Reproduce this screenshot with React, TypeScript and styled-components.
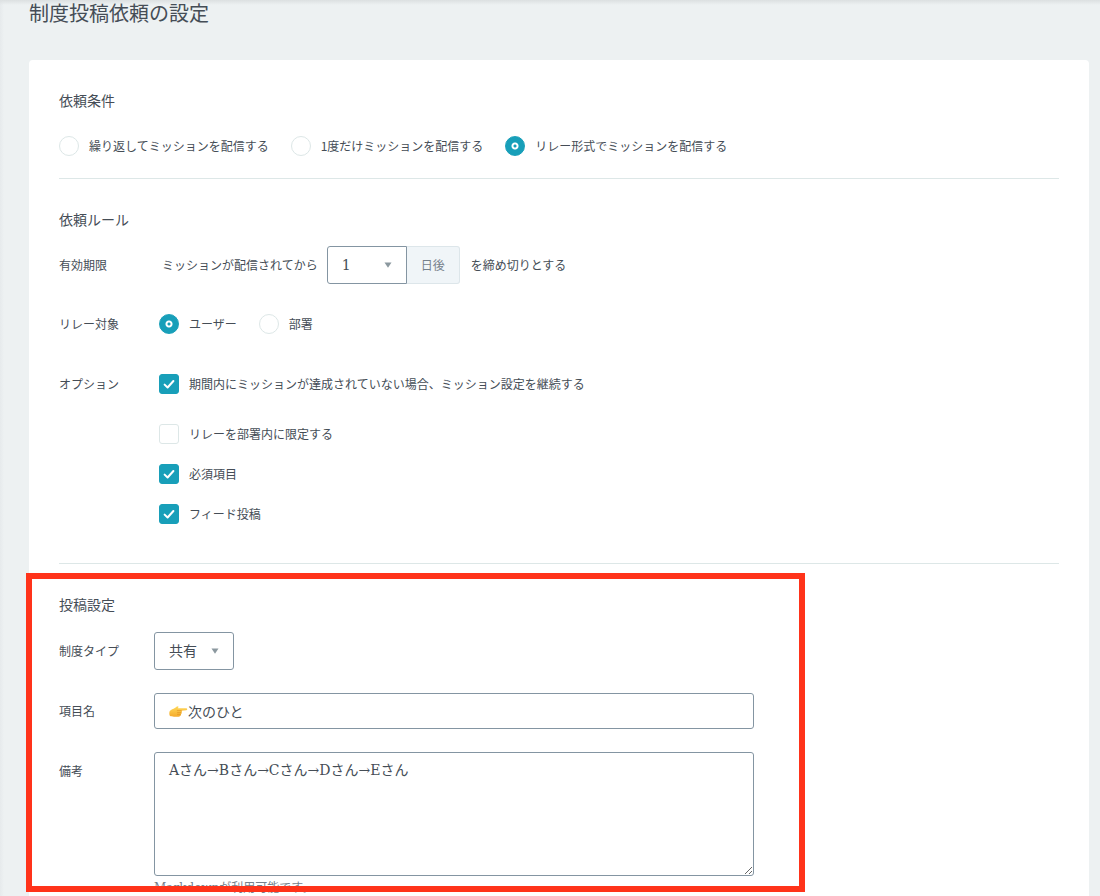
import React, { ReactNode } from "react";
import styled, { createGlobalStyle } from "styled-components";

const color = {
  page: "#edf1f2",
  text: "#454d56",
  muted: "#75818c",
  border: "#8495a2",
  line: "#dde7e7",
  teal: "#189fb9",
  marker: "#ff331a",
};

const slab = `"DejaVu Serif", "Noto Sans CJK JP", serif`;

const GlobalStyle = createGlobalStyle`
  *, *::before, *::after { box-sizing: border-box; }
  body {
    margin: 0;
    background: ${color.page};
    color: ${color.text};
    font-family: "Noto Sans CJK JP", sans-serif;
    font-size: 12px;
    line-height: 20px;
  }
  input, select, textarea { margin: 0; font: inherit; color: inherit; }
`;

const Page = styled.main`
  display: flex;
  flex-direction: column;
  min-height: 100vh;
  padding: 0 11px 0 29px;
  background:
    linear-gradient(to bottom, #dce0e1, rgba(237, 241, 242, 0)) top / 100% 5px no-repeat,
    linear-gradient(to right, #e6eaec, rgba(237, 241, 242, 0)) left / 4px 100% no-repeat,
    ${color.page};
`;

const Title = styled.h1`
  margin: 0 0 34px;
  font-size: 20px;
  line-height: 26px;
  font-weight: 400;
`;

const Card = styled.form`
  flex: 1;
  padding: 0 30px;
  background: #fff;
  border-radius: 4px 4px 0 0;
`;

const Section = styled.section<{ $end?: number }>`
  position: relative;
  padding: 30px 0 ${(p) => p.$end ?? 0}px;
  border-bottom: ${(p) => (p.$end ? `1px solid ${color.line}` : "none")};
`;

const Heading = styled.h2<{ $gap: number }>`
  margin: 0 0 ${(p) => p.$gap}px;
  font-size: 14px;
  line-height: 20px;
  font-weight: 400;
`;

const Rows = styled.div<{ $gap: number }>`
  display: flex;
  flex-direction: column;
  gap: ${(p) => p.$gap}px;
`;

const Row = styled.div<{ $label: number; $top?: boolean }>`
  display: grid;
  grid-template-columns: ${(p) => p.$label}px minmax(0, 1fr);
  align-items: ${(p) => (p.$top ? "start" : "center")};
`;

const RowLabel = styled.label<{ $inset?: number }>`
  padding-top: ${(p) => p.$inset ?? 0}px;
`;

const Inline = styled.div<{ $gap?: number }>`
  display: flex;
  align-items: center;
  flex-wrap: wrap;
  gap: ${(p) => p.$gap ?? 0}px;
`;

const Phrase = styled.span`
  padding: 0 9px 0 3px;
`;

const PhraseEnd = styled.span`
  padding-left: 11px;
`;

const ChoiceLabel = styled.label`
  display: inline-flex;
  align-items: center;
  gap: 10px;
`;

const RadioInput = styled.input`
  appearance: none;
  width: 20px;
  height: 20px;
  border: 1px solid ${color.line};
  border-radius: 50%;
  background: #fff;
  &:checked {
    border-color: ${color.teal};
    background: radial-gradient(circle, ${color.teal} 1px, #fff 2px, #fff 3px, ${color.teal} 4px);
  }
`;

const Stack = styled.span`
  display: inline-grid;
  align-items: center;
  justify-self: start;
  > * { grid-area: 1 / 1; }
  > svg { pointer-events: none; }
`;

const CheckInput = styled.input`
  appearance: none;
  width: 20px;
  height: 20px;
  border: 1px solid ${color.line};
  border-radius: 3px;
  background: #fff;
  & + svg { visibility: hidden; }
  &:checked {
    border-color: ${color.teal};
    background: ${color.teal};
  }
  &:checked + svg { visibility: visible; }
`;

const SelectBox = styled.select<{ $joined?: boolean }>`
  appearance: none;
  width: 80px;
  height: 38px;
  padding: 0 24px 0 14px;
  border: 1px solid ${color.border};
  border-radius: ${(p) => (p.$joined ? "3px 0 0 3px" : "3px")};
  background: #fff;
  font-family: ${slab};
  font-size: 14px;
`;

const Caret = styled.svg`
  justify-self: end;
  margin-right: 15px;
`;

const Addon = styled.span`
  display: flex;
  align-items: center;
  justify-content: center;
  width: 53px;
  height: 38px;
  border: 1px solid #dde6ea;
  border-left: 0;
  border-radius: 0 3px 3px 0;
  background: #f0f5f8;
  color: ${color.muted};
`;

const Options = styled.div`
  display: flex;
  flex-direction: column;
  align-items: flex-start;
  gap: 20px;
  padding-top: 10px;
  > :first-child { margin-bottom: 10px; }
`;

const TextField = styled.div`
  display: flex;
  align-items: center;
  width: 100%;
  max-width: 600px;
  height: 36px;
  padding: 0 14px;
  border: 1px solid ${color.border};
  border-radius: 3px;
  background: #fff;
`;

const TextInput = styled.input`
  flex: 1;
  min-width: 0;
  height: 34px;
  padding: 0;
  border: 0;
  outline: 0;
  background: transparent;
  font-family: ${slab};
  font-size: 14px;
`;

const TextArea = styled.textarea`
  display: block;
  width: 100%;
  max-width: 600px;
  height: 124px;
  padding: 7px 14px;
  border: 1px solid ${color.border};
  border-radius: 3px;
  background: #fff;
  font-family: ${slab};
  font-size: 14px;
  line-height: 20px;
`;

const Hint = styled.p`
  margin: 4px 0 0;
  font-family: ${slab};
  line-height: 16px;
  color: ${color.muted};
`;

const Marker = styled.div`
  position: absolute;
  top: 9px;
  bottom: 4px;
  left: -33px;
  width: 779px;
  border: 6px solid ${color.marker};
  pointer-events: none;
`;

type ChoiceProps = { children: ReactNode; checked?: boolean };

const Radio = ({ children, name, checked }: ChoiceProps & { name: string }) => (
  <ChoiceLabel>
    <RadioInput type="radio" name={name} defaultChecked={checked} />
    {children}
  </ChoiceLabel>
);

const Check = ({ children, checked }: ChoiceProps) => (
  <ChoiceLabel>
    <Stack>
      <CheckInput type="checkbox" defaultChecked={checked} />
      <svg width="20" height="20" viewBox="0 0 20 20" fill="none" aria-hidden="true">
        <path d="M5.6 10.6 8.6 13.5 14.4 7" stroke="#fff" strokeWidth="2" strokeLinecap="round" strokeLinejoin="round" />
      </svg>
    </Stack>
    {children}
  </ChoiceLabel>
);

const Select = ({ id, value, joined }: { id: string; value: string; joined?: boolean }) => (
  <Stack>
    <SelectBox id={id} defaultValue={value} $joined={joined}>
      <option>{value}</option>
    </SelectBox>
    <Caret width="8" height="6" viewBox="0 0 8 6" aria-hidden="true">
      <path d="M.5.5h7L4 5.8z" fill="#8b989f" />
    </Caret>
  </Stack>
);

const PointingHand = () => (
  <svg width="19" height="14" viewBox="0 0 19 14" role="img" aria-label="👉">
    <defs>
      <linearGradient id="skin" x1="0" y1="0" x2="0" y2="1">
        <stop offset="0" stopColor="#ffd95a" />
        <stop offset="1" stopColor="#f5ab2c" />
      </linearGradient>
    </defs>
    <path
      d="M.8 6.900C2.300 5.700 4.200 5 5.800 4 7 3.200 7.900 2.200 8.900 2.200c.9.200.6 1.200-.2 2h8.500c1.400 0 1.400 2 0 2.100l-4.700.4c.7.500.6 1.400-.1 1.800.5.7.2 1.500-.5 1.800.3.800-.1 1.400-.8 1.600-.7 1-4.100.9-6.100.8-1.800-.1-2.900-.5-4-.7C.1 10.800.1 8 .8 6.900z"
      fill="url(#skin)"
    />
    <path d="M8.300 6.600h4M8.500 8.600h3.500M8.500 10.400h2.800" stroke="#dd8d1e" strokeWidth=".6" strokeLinecap="round" />
  </svg>
);

export default function App() {
  return (
    <>
      <GlobalStyle />
      <Page>
        <Title>制度投稿依頼の設定</Title>
        <Card>
          <Section $end={22}>
            <Heading $gap={26}>依頼条件</Heading>
            <Inline $gap={22} role="radiogroup" aria-label="依頼条件">
              <Radio name="condition">繰り返してミッションを配信する</Radio>
              <Radio name="condition">1度だけミッションを配信する</Radio>
              <Radio name="condition" checked>リレー形式でミッションを配信する</Radio>
            </Inline>
          </Section>

          <Section $end={39}>
            <Heading $gap={17}>依頼ルール</Heading>
            <Rows $gap={30}>
              <Row $label={100}>
                <RowLabel htmlFor="days">有効期限</RowLabel>
                <Inline>
                  <Phrase>ミッションが配信されてから</Phrase>
                  <Select id="days" value="1" joined />
                  <Addon>日後</Addon>
                  <PhraseEnd>を締め切りとする</PhraseEnd>
                </Inline>
              </Row>
              <Row $label={100}>
                <RowLabel as="span">リレー対象</RowLabel>
                <Inline $gap={22} role="radiogroup" aria-label="リレー対象">
                  <Radio name="target" checked>ユーザー</Radio>
                  <Radio name="target">部署</Radio>
                </Inline>
              </Row>
              <Row $label={100} $top>
                <RowLabel as="span" $inset={10}>オプション</RowLabel>
                <Options>
                  <Check checked>期間内にミッションが達成されていない場合、ミッション設定を継続する</Check>
                  <Check>リレーを部署内に限定する</Check>
                  <Check checked>必須項目</Check>
                  <Check checked>フィード投稿</Check>
                </Options>
              </Row>
            </Rows>
          </Section>

          <Section>
            <Heading $gap={18}>投稿設定</Heading>
            <Rows $gap={23}>
              <Row $label={95}>
                <RowLabel htmlFor="kind">制度タイプ</RowLabel>
                <Select id="kind" value="共有" />
              </Row>
              <Row $label={95}>
                <RowLabel htmlFor="item">項目名</RowLabel>
                <TextField>
                  <PointingHand />
                  <TextInput id="item" type="text" defaultValue="次のひと" />
                </TextField>
              </Row>
              <Row $label={95} $top>
                <RowLabel htmlFor="note" $inset={9}>備考</RowLabel>
                <div>
                  <TextArea id="note" defaultValue="Aさん→Bさん→Cさん→Dさん→Eさん" />
                  <Hint>Markdownが利用可能です。</Hint>
                </div>
              </Row>
            </Rows>
            <Marker />
          </Section>
        </Card>
      </Page>
    </>
  );
}
